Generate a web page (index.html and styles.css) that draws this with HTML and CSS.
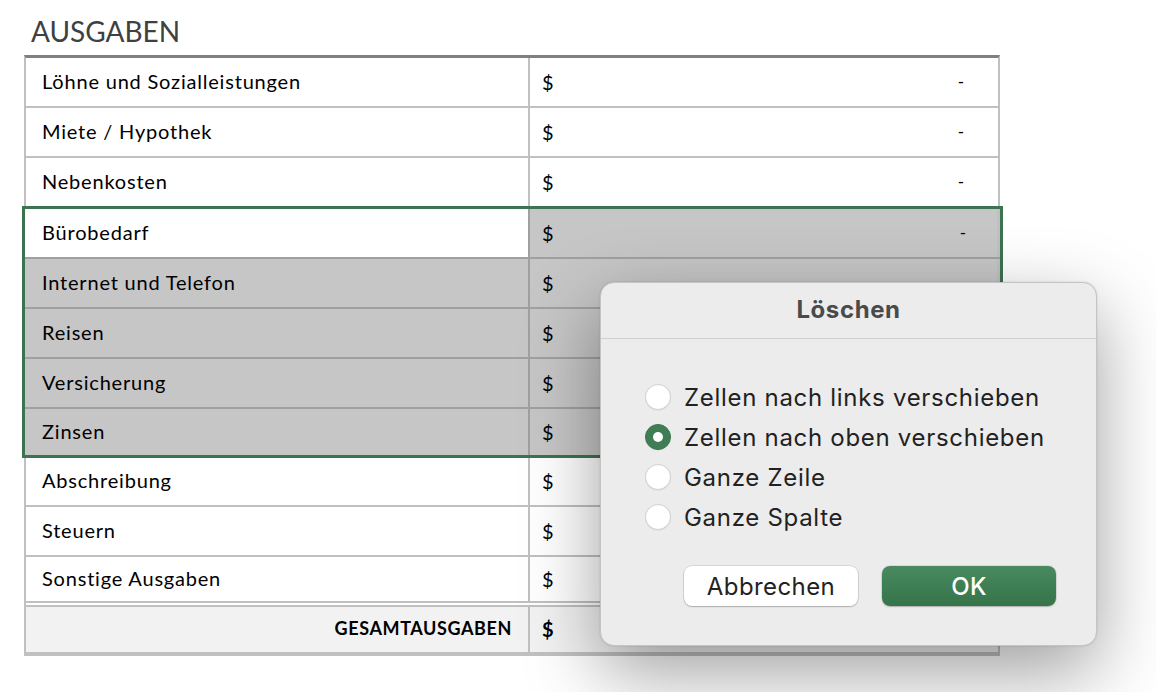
FILE: index.html
```html
<!DOCTYPE html>
<html lang="de">
<head>
<meta charset="utf-8">
<title>Ausgaben</title>
<link rel="stylesheet" href="styles.css">
</head>
<body>
<div class="page">
  <h1 class="heading">AUSGABEN</h1>
  <div class="sheet">
    <div class="row"><div class="label">Löhne und Sozialleistungen</div><div class="amount"><span>$</span><span class="dash">-</span></div></div>
    <div class="row"><div class="label">Miete / Hypothek</div><div class="amount"><span>$</span><span class="dash">-</span></div></div>
    <div class="row row-before-sel"><div class="label">Nebenkosten</div><div class="amount"><span>$</span><span class="dash">-</span></div></div>
    <div class="selection">
      <div class="row sel"><div class="label active">Bürobedarf</div><div class="amount"><span>$</span><span class="dash">-</span></div></div>
      <div class="row sel"><div class="label">Internet und Telefon</div><div class="amount"><span>$</span></div></div>
      <div class="row sel"><div class="label">Reisen</div><div class="amount"><span>$</span></div></div>
      <div class="row sel"><div class="label">Versicherung</div><div class="amount"><span>$</span></div></div>
      <div class="row sel last"><div class="label">Zinsen</div><div class="amount"><span>$</span></div></div>
    </div>
    <div class="row row-after-sel"><div class="label">Abschreibung</div><div class="amount"><span>$</span></div></div>
    <div class="row"><div class="label">Steuern</div><div class="amount"><span>$</span></div></div>
    <div class="row row-last"><div class="label">Sonstige Ausgaben</div><div class="amount"><span>$</span></div></div>
    <div class="row total"><div class="label">GESAMTAUSGABEN</div><div class="amount"><span>$</span></div></div>
  </div>

  <div class="dialog">
    <div class="dialog-title">Löschen</div>
    <div class="options">
      <label class="option"><span class="radio"></span><span>Zellen nach links verschieben</span></label>
      <label class="option"><span class="radio checked"></span><span>Zellen nach oben verschieben</span></label>
      <label class="option"><span class="radio"></span><span>Ganze Zeile</span></label>
      <label class="option"><span class="radio"></span><span>Ganze Spalte</span></label>
    </div>
    <div class="buttons">
      <button class="btn btn-cancel">Abbrechen</button>
      <button class="btn btn-ok">OK</button>
    </div>
  </div>
</div>
</body>
</html>
```

FILE: styles.css
```css
* { box-sizing: border-box; }
html, body { margin: 0; padding: 0; background: #ffffff; }
body { width: 1156px; height: 692px; overflow: hidden; }

.page {
  position: relative;
  width: 1156px;
  height: 692px;
}

.heading {
  margin: 0;
  padding: 14px 0 0 31px;
  height: 55px;
  font-family: Lato, "DejaVu Sans", sans-serif;
  font-weight: 400;
  font-size: 28px;
  line-height: 34px;
  color: #404040;
  letter-spacing: 0;
}

.sheet {
  margin-left: 24px;
  width: 976px;
  border-top: 3px solid #808080;
  border-left: 2px solid #c0c0c0;
  border-right: 2px solid #c0c0c0;
  border-bottom: 4px solid #c0c0c0;
  font-family: Lato, "DejaVu Sans", sans-serif;
  font-size: 20px;
  letter-spacing: 0.8px;
  color: #000;
}

.row {
  display: grid;
  grid-template-columns: 504px 1fr;
  height: 50px;
  border-bottom: 2px solid #c0c0c0;
}

.label {
  display: flex;
  align-items: center;
  padding-left: 16px;
  padding-bottom: 3px;
  border-right: 2px solid #c0c0c0;
  background: #ffffff;
}

.amount {
  display: flex;
  align-items: center;
  justify-content: space-between;
  padding-left: 12px;
  padding-right: 34px;
  padding-bottom: 1px;
  background: #ffffff;
  letter-spacing: 0;
}

.dash { font-size: 17px; }

.row-before-sel { border-bottom: none; height: 48px; }

.selection {
  margin: 0 -5px 0 -4px;
  border: 3px solid #3c7350;
}
.selection .row {
  border-bottom: 2px solid #a0a0a0;
  padding-right: 3px;
  grid-template-columns: 505px 1fr;
  background: #c0c0c0;
}
.selection .row .label { border-right: 2px solid #a0a0a0; background: #c6c6c6; padding-left: 17px; }
.selection .row .label.active { background: #ffffff; }
.selection .row .amount { background: #c6c6c6; padding-right: 31px; }
.selection .row.last { border-bottom: none; height: 46px; }

.row-after-sel { height: 49px; }

.row-last {
  height: 50px;
  border-bottom: 6px double #c0c0c0;
}

.total {
  height: 45px;
  border-bottom: none;
}
.total .label {
  justify-content: flex-end;
  padding-right: 16px;
  background: #f2f2f2;
  font-weight: 700;
  font-size: 18px;
  letter-spacing: 0.6px;
}
.total .amount { background: #f2f2f2; font-weight: 700; }

/* Dialog */
.dialog {
  position: absolute;
  left: 600px;
  top: 282px;
  width: 497px;
  height: 364px;
  background: #ececec;
  border: 1px solid #c4c4c4;
  border-radius: 14px;
  box-shadow: 0 26px 75px rgba(0, 0, 0, 0.38), 0 0 2px rgba(0, 0, 0, 0.15);
  font-family: Inter, "Liberation Sans", sans-serif;
  color: #222222;
}

.dialog-title {
  height: 56px;
  padding-bottom: 3px;
  display: flex;
  align-items: center;
  justify-content: center;
  font-weight: 700;
  font-size: 24px;
  letter-spacing: 0.6px;
  color: #4a4a4a;
  border-bottom: 1px solid #d0d0d0;
}

.options {
  display: flex;
  flex-direction: column;
  padding: 38px 0 0 44px;
}

.option {
  display: flex;
  align-items: center;
  gap: 13px;
  height: 40px;
  font-size: 24px;
  letter-spacing: 0.7px;
  color: #222222;
}

.radio {
  width: 26px;
  height: 26px;
  border-radius: 50%;
  background: #ffffff;
  border: 1px solid #d2d2d2;
  box-shadow: 0 0.5px 1px rgba(0, 0, 0, 0.08);
  flex: none;
  position: relative;
}
.radio.checked {
  background: #3f7e55;
  border-color: #3a744e;
}
.radio.checked::after {
  content: "";
  position: absolute;
  left: 50%;
  top: 50%;
  width: 10px;
  height: 10px;
  margin: -5px 0 0 -5px;
  border-radius: 50%;
  background: #ffffff;
}

.buttons {
  display: flex;
  gap: 24px;
  padding: 29px 0 0 83px;
}

.btn {
  width: 174px;
  height: 40px;
  border-radius: 8px;
  font-family: Inter, "Liberation Sans", sans-serif;
  font-size: 24px;
  letter-spacing: 0.4px;
  padding: 0;
  cursor: default;
}
.btn-cancel {
  background: #ffffff;
  color: #222222;
  border: none;
  box-shadow: 0 0 0 0.5px rgba(0, 0, 0, 0.18), 0 1px 1.5px rgba(0, 0, 0, 0.2);
}
.btn-ok {
  background: linear-gradient(#4a8a60, #367449);
  color: #ffffff;
  border: none;
  font-weight: 500;
  box-shadow: 0 0 0 0.5px rgba(0, 0, 0, 0.15), 0 1px 1.5px rgba(0, 0, 0, 0.2);
}
```
